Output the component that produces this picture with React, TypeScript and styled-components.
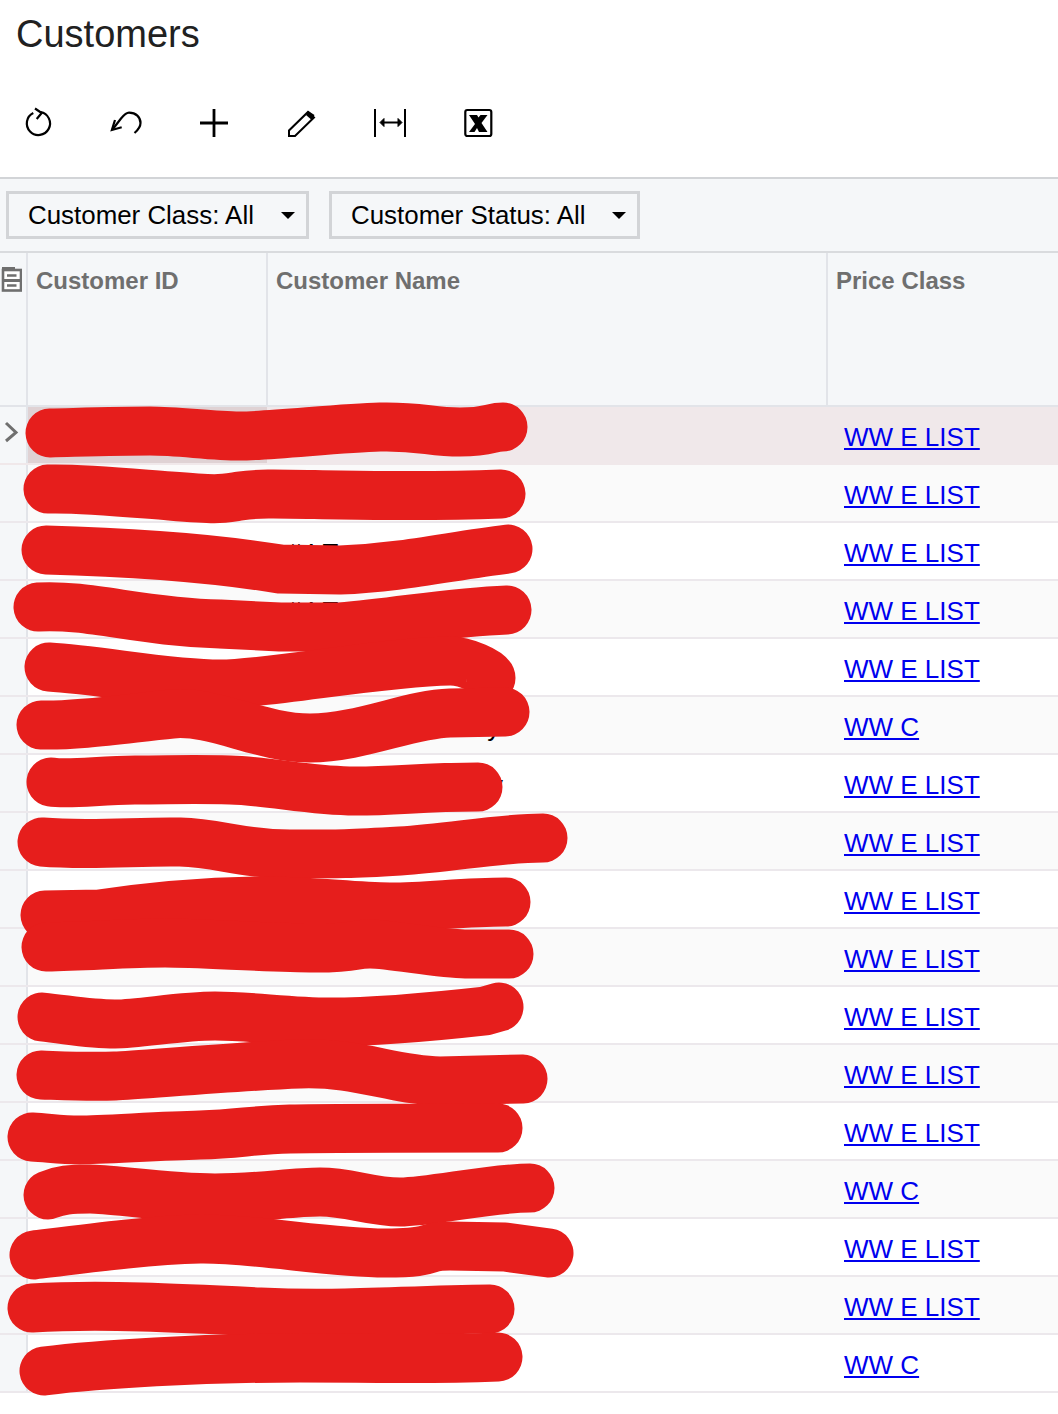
import React from "react";
import styled, { createGlobalStyle } from "styled-components";

const rows: { price: string; name?: string; nameOffset?: number }[] = [
    { price: "WW E LIST" },
    { price: "WW E LIST" },
    { price: "WW E LIST", name: "#4 T" },
    { price: "WW E LIST", name: "#4 T" },
    { price: "WW E LIST" },
    { price: "WW C", name: "ty", nameOffset: 213 },
    { price: "WW E LIST", name: "y", nameOffset: 223 },
    { price: "WW E LIST" },
    { price: "WW E LIST" },
    { price: "WW E LIST" },
    { price: "WW E LIST" },
    { price: "WW E LIST" },
    { price: "WW E LIST" },
    { price: "WW C" },
    { price: "WW E LIST" },
    { price: "WW E LIST" },
    { price: "WW C" },
];

// the marker strokes that hide the customer names
const scribbles = [
    "M50 433 C 90 432, 120 431, 150 431 S 210 436, 240 436 S 340 428, 380 427 S 430 432, 460 432 S 490 427, 503 427",
    "M48 489 C 80 488, 120 492, 170 496 S 220 499, 240 496 S 280 494, 340 495 S 450 496, 501 494",
    "M46 550 C 120 552, 200 556, 280 569 L 340 570 C 400 568, 450 556, 508 549",
    "M38 607 C 90 604, 140 622, 220 624 L 280 627 L 340 627 C 400 622, 450 612, 507 610",
    "M49 667 C 100 670, 170 684, 220 684 S 380 662, 450 661 C 465 661, 491 672, 491 678",
    "M41 725 C 80 726, 130 718, 172 714 S 260 738, 310 738 S 410 714, 450 713 L 505 712",
    "M51 782 C 70 785, 100 780, 135 780 S 190 779, 230 780 S 310 791, 355 791 S 420 787, 478 787",
    "M42 842 C 90 846, 140 841, 180 842 S 240 854, 290 854 S 350 854, 400 851 S 500 838, 543 838",
    "M45 915 L 100 914 C 140 908, 200 902, 255 901 S 350 907, 390 907 S 460 902, 506 902",
    "M46 947 C 90 946, 130 943, 165 943 S 270 948, 315 948 S 350 944, 370 944 S 440 954, 465 954 L 509 954",
    "M42 1017 C 70 1020, 90 1024, 115 1024 S 180 1016, 215 1016 S 290 1022, 330 1022 S 440 1016, 485 1011 L 499 1007",
    "M41 1075 C 70 1076, 90 1077, 115 1076 S 240 1066, 300 1064 S 390 1080, 440 1081 L 523 1079",
    "M32 1137 C 50 1138, 60 1140, 80 1140 S 160 1136, 200 1135 S 250 1130, 290 1129 S 440 1128, 498 1128",
    "M48 1195 C 60 1190, 70 1189, 90 1189 S 170 1198, 215 1198 S 290 1192, 320 1192 S 370 1202, 400 1202 S 490 1188, 530 1188",
    "M34 1255 C 90 1248, 150 1240, 200 1239 S 330 1253, 385 1253 S 420 1246, 450 1246 L 505 1247 L 549 1253",
    "M32 1308 C 100 1304, 180 1308, 260 1312 S 400 1310, 490 1309",
    "M44 1371 C 100 1364, 200 1358, 300 1358 S 420 1360, 498 1357",
];

const GlobalStyle = createGlobalStyle`
    html, body {
        margin: 0;
        background: #fff;
        font-family: "Liberation Sans", Arial, sans-serif;
    }
`;

const Page = styled.div`
    position: relative;
    width: 1058px;
    height: 1414px;
    overflow: hidden;
`;

const Title = styled.h1`
    margin: 0;
    height: 94px;
    padding: 13px 0 0 16px;
    box-sizing: border-box;
    font-size: 38px;
    line-height: 43px;
    font-weight: 400;
    color: #212121;
`;

const Toolbar = styled.div`
    display: flex;
    height: 85px;
    padding: 8px 0 0 17px;
    box-sizing: border-box;
    border-bottom: 2px solid #d2d4d7;
`;

const ToolButton = styled.div`
    width: 88px;
    height: 42px;
    display: flex;
    align-items: center;
    padding-left: 5px;
    box-sizing: border-box;
    svg { display: block; }
`;

const FilterBar = styled.div`
    display: flex;
    gap: 20px;
    height: 74px;
    padding: 12px 0 0 6px;
    box-sizing: border-box;
    background: #f5f7f9;
    border-bottom: 2px solid #d9dbde;
`;

const FilterButton = styled.div<{ $width: number }>`
    width: ${(p) => p.$width}px;
    height: 48px;
    box-sizing: border-box;
    border: 3px solid #d2d4d7;
    padding-left: 19px;
    display: flex;
    align-items: center;
    justify-content: space-between;
    font-size: 25.9px;
    color: #000;
`;

const Caret = styled.span`
    width: 0;
    height: 0;
    margin-right: 11px;
    border-left: 7px solid transparent;
    border-right: 7px solid transparent;
    border-top: 7px solid #000;
`;

const Header = styled.div`
    display: grid;
    grid-template-columns: 26px 240px 560px 1fr;
    height: 154px;
    background: #f5f7f9;
    border-bottom: 2px solid #e2e4e9;
    box-sizing: border-box;
`;

const HeadCell = styled.div`
    padding: 14px 0 0 8px;
    border-left: 2px solid #e2e4e9;
    font-size: 24px;
    line-height: 28px;
    font-weight: 700;
    color: #6f6f6f;
    &:first-child {
        border-left: 0;
        padding: 14px 0 0 1px;
    }
`;

const Row = styled.div<{ $selected: boolean; $even: boolean }>`
    display: grid;
    grid-template-columns: 28px 239px 560px 1fr;
    height: 58px;
    box-sizing: border-box;
    border-bottom: 2px solid ${(p) => (p.$selected ? "#f0e8ea" : "#ece8ec")};
    background: ${(p) => (p.$selected ? "#f0e8ea" : p.$even ? "#fafafa" : "#fff")};
    &:last-child {
        border-bottom: 2px solid #d2d4d7;
    }
`;

const SelectorCell = styled.div`
    background: #f5f7f9;
    border-right: 2px solid #e2e4e9;
    box-sizing: border-box;
    display: flex;
    align-items: center;
    padding: 0 0 7px 3px;
`;

const IdCell = styled.div<{ $selected: boolean }>`
    background: ${(p) => (p.$selected ? "#dfd2d4" : "transparent")};
`;

const NameCell = styled.div<{ $offset: number }>`
    padding: 15px 0 0 ${(p) => p.$offset}px;
    font-size: 25.9px;
    line-height: 30px;
    color: #000;
`;

const PriceCell = styled.div`
    padding: 15px 0 0 17px;
    font-size: 26px;
    line-height: 30px;
`;

const PriceLink = styled.a`
    color: #0000ee;
    text-decoration: underline;
`;

const ScribbleLayer = styled.svg`
    position: absolute;
    top: 0;
    left: 0;
`;

const iconProps = {
    width: 32,
    height: 32,
    viewBox: "0 0 32 32",
    fill: "none",
    stroke: "#000",
    strokeWidth: 2.2,
};

const RefreshIcon = () => (
    <svg {...iconProps}>
        <path d="M11.3 6 A11.6 11.6 0 1 0 18.5 5" />
        <path d="M13 1.5 L19.7 6 L14.7 12" />
    </svg>
);

const UndoIcon = () => (
    <svg {...iconProps}>
        <path d="M2.5 22.5 L11 11.5 C14 8, 16 5.7, 19 5.7 C26 5.7, 30.5 10, 30.5 16 C30.5 20, 28 23, 24.5 26" />
        <path d="M5 13 L1.9 23 L11.7 20.3" />
    </svg>
);

const PlusIcon = () => (
    <svg {...iconProps}>
        <path d="M2 16 H30 M16 2 V30" strokeWidth={2.8} />
    </svg>
);

const PencilIcon = () => (
    <svg {...iconProps}>
        <path d="M3 29 V23.5 L22 5 L28 10.5 L9 29 Z" strokeWidth={2} />
        <path d="M22.3 4 L28.5 8 L25.7 13 L20 8 Z" fill="#000" stroke="none" />
    </svg>
);

const FitIcon = () => (
    <svg width={36} height={32} viewBox="0 0 36 32" fill="none" stroke="#000" strokeWidth={2}>
        <path d="M1 2 V30 M31 2 V30" />
        <path d="M8 15.5 H26" />
        <path d="M10 11.5 L6 15.5 L10 19.5 Z M24 11.5 L28 15.5 L24 19.5 Z" fill="#000" strokeWidth={1} />
    </svg>
);

const ExcelIcon = () => (
    <svg {...iconProps}>
        <rect x="3.3" y="3" width="26" height="26" rx="2" />
        <path d="M7 8 H15 L16.5 10.5 L18.5 8 H25.5 L19.5 16 L25.5 25 H17 L15 21 L12.5 25 H7 L13 17 Z" fill="#000" stroke="none" />
    </svg>
);

const CabinetIcon = () => (
    <svg width={21} height={25} viewBox="0 0 21 25" fill="none" stroke="#6f6f6f" strokeWidth={2.6}>
        <rect x="1" y="0" width="13" height="3" fill="#6f6f6f" stroke="none" />
        <rect x="2" y="3" width="18" height="20.5" fill="#fff" />
        <path d="M2 13.5 H20" strokeWidth={3} />
        <path d="M6 8.5 H15.5 M6 18.5 H15.5" strokeWidth={2.4} />
    </svg>
);

const ChevronIcon = () => (
    <svg width={16} height={24} viewBox="0 0 16 24" fill="none" stroke="#6f6f6f" strokeWidth={3}>
        <path d="M3 3 L13 12.5 L3 21" />
    </svg>
);

const App = () => {
    return (
        <Page>
            <GlobalStyle />
            <Title>Customers</Title>
            <Toolbar>
                <ToolButton><RefreshIcon /></ToolButton>
                <ToolButton><UndoIcon /></ToolButton>
                <ToolButton><PlusIcon /></ToolButton>
                <ToolButton><PencilIcon /></ToolButton>
                <ToolButton><FitIcon /></ToolButton>
                <ToolButton><ExcelIcon /></ToolButton>
            </Toolbar>
            <FilterBar>
                <FilterButton $width={303}>
                    Customer Class: All
                    <Caret />
                </FilterButton>
                <FilterButton $width={311}>
                    Customer Status: All
                    <Caret />
                </FilterButton>
            </FilterBar>
            <Header>
                <HeadCell><CabinetIcon /></HeadCell>
                <HeadCell>Customer ID</HeadCell>
                <HeadCell>Customer Name</HeadCell>
                <HeadCell>Price Class</HeadCell>
            </Header>
            {rows.map((row, i) => (
                <Row key={i} $selected={i === 0} $even={i % 2 === 1}>
                    <SelectorCell>{i === 0 && <ChevronIcon />}</SelectorCell>
                    <IdCell $selected={i === 0} />
                    <NameCell $offset={row.nameOffset ?? 20}>{row.name}</NameCell>
                    <PriceCell>
                        <PriceLink href="#">{row.price}</PriceLink>
                    </PriceCell>
                </Row>
            ))}
            <ScribbleLayer width={1058} height={1414} fill="none" stroke="#e61e1c" strokeWidth={49} strokeLinecap="round" strokeLinejoin="round">
                {scribbles.map((d, i) => (
                    <path key={i} d={d} />
                ))}
            </ScribbleLayer>
        </Page>
    );
};

export default App;
